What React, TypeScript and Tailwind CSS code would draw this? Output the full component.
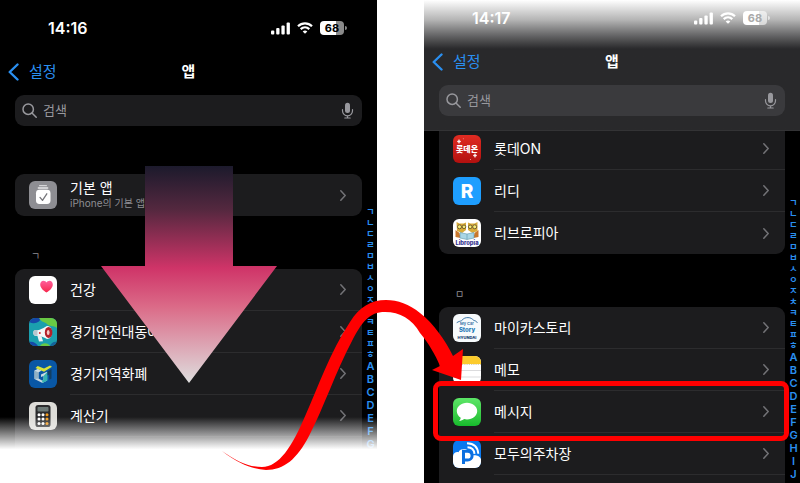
import type { ReactNode } from "react";
import clsx from "clsx";

type AppRow = {
  name: string;
  icon: ReactNode;
  caption?: string;
  highlighted?: boolean;
};

const HANGUL = "ㄱㄴㄷㄹㅁㅂㅅㅇㅈㅊㅋㅌㅍㅎ".split("");

function IconTile({ className, children }: { className: string; children: ReactNode }) {
  return (
    <span className={clsx("size-7 shrink-0 overflow-hidden rounded-md", className)}>
      <svg viewBox="0 0 28 28" className="size-7" aria-hidden="true">
        {children}
      </svg>
    </span>
  );
}

function DefaultAppsIcon() {
  return (
    <IconTile className="bg-[#8e8e93]">
      <rect x="10" y="4" width="8" height="1.3" rx="0.6" fill="#d5d5d8" />
      <rect x="8.6" y="6.2" width="10.8" height="1.6" rx="0.8" fill="#e9e9eb" />
      <rect x="7" y="8.8" width="14.5" height="14.2" rx="3.4" fill="#fff" />
      <path d="M11 16.4l2.5 3 4.3-6.6" fill="none" stroke="#77777c" strokeWidth="1.3" strokeLinecap="round" strokeLinejoin="round" />
    </IconTile>
  );
}

function HealthIcon() {
  return (
    <IconTile className="bg-white">
      <defs>
        <linearGradient id="heart" x1="0" y1="0" x2="0" y2="1">
          <stop offset="0" stopColor="#ff5f9c" />
          <stop offset="1" stopColor="#f6264a" />
        </linearGradient>
      </defs>
      <path
        d="M17.5 16.6C14 14.2 11.2 11.6 11.2 8.4c0-2.2 1.5-3.7 3.3-3.7 1.3 0 2.4.7 3 1.8.6-1.1 1.7-1.8 3-1.8 1.8 0 3.3 1.5 3.3 3.7 0 3.2-2.8 5.8-6.3 8.2z"
        fill="url(#heart)"
      />
    </IconTile>
  );
}

function SafetyMapIcon() {
  return (
    <IconTile className="bg-[#1b9fae]">
      <path d="M0 0h12c-1 4-6 7-12 4z" fill="#1548a8" />
      <path d="M10 0h18v10c-4-3-7-1-10-4-2-2-6-2-8-6z" fill="#69c944" />
      <path d="M0 24c4-1 7 1 9 4H0z" fill="#1548a8" />
      <path d="M11 28c2-3 7-4 10 0z" fill="#69c944" />
      <path d="M21 28c1-3 4-5 7-4v4z" fill="#14639b" />
      <path d="M5 12.500l5-.6 9-3.900v13l-8-3-5.200-.3c-1.800-.8-1.900-4-.8-5.200z" fill="#f4f7f8" />
      <path d="M8.300 17.500l4.200.8 1.500 5-4 .2z" fill="#eef2f4" />
      <path d="M5 12.500l3.500-.4v5.500l-2.700-.1c-1.800-.6-1.900-3.800-.8-5z" fill="#b9c6ce" />
      <ellipse cx="18.600" cy="14.400" rx="4.400" ry="6.400" fill="#f4f7f8" />
      <ellipse cx="19.600" cy="14.400" rx="3.800" ry="5.500" fill="#b42029" />
      <ellipse cx="19.200" cy="14.400" rx="1.400" ry="2.500" fill="#f5c9c5" />
      <circle cx="10.800" cy="15" r="1" fill="#d62b2f" />
    </IconTile>
  );
}

function LocalPayIcon() {
  return (
    <IconTile className="bg-[#0957a5]">
      <path d="M5.500 10.500L9 8.800l3.500 1.600-3 2v6.200l3.500 2 1.500-1V16l-2.500 1v-2.500l6-2.700v8.700L13.500 23l-8-4z" fill="#c9d9e2" />
      <path d="M9.500 12.400v6.200l-4 .4v-8.500z" fill="#8fb0c4" />
      <path d="M13 20.600l1.500-1V16l4-4.200v8.700L13.500 23z" fill="#35b3b0" />
      <path d="M18.500 11.500L22.500 9v9.500l-2.300 1.300v-5.300l-1.700 1z" fill="#123f63" />
      <path d="M6.500 8l2.200-2 6.300 2.500L21 5.400l2 1.400-8 5z" fill="#d6e23a" />
    </IconTile>
  );
}

function CalculatorIcon() {
  return (
    <IconTile className="bg-[#dddcd8]">
      <rect x="6.500" y="3" width="15" height="22" rx="2.600" fill="#2b2b2d" />
      <rect x="8.500" y="5" width="11" height="4.500" rx="0.800" fill="#6d7977" />
      {[12.8, 17.1, 21.4].map((y) => (
        <g key={y}>
          <circle cx="10" cy={y} r="1.500" fill="#fff" />
          <circle cx="14" cy={y} r="1.500" fill="#fff" />
          <circle cx="18" cy={y} r="1.500" fill="#f39c20" />
        </g>
      ))}
    </IconTile>
  );
}

function LotteOnIcon() {
  return (
    <IconTile className="bg-linear-to-b from-[#e02b22] to-[#b3100f]">
      <text x="14" y="17" textAnchor="middle" fontSize="8" fontWeight="900" fill="#fff">
        롯데온
      </text>
      <path d="M6 4.500l.6 1.400 1.400.6-1.400.6L6 8.500l-.6-1.400L4 6.500l1.400-.6z" fill="#fff" stroke="#fff" strokeWidth="0.500" />
      <path d="M22 18.500l.6 1.400 1.400.6-1.400.6-.6 1.400-.6-1.400-1.400-.6 1.400-.6z" fill="#fff" stroke="#fff" strokeWidth="0.500" />
      <circle cx="10.300" cy="3.800" r="0.500" fill="#f3a19d" />
      <circle cx="17.500" cy="24.500" r="0.600" fill="#f3a19d" />
    </IconTile>
  );
}

function RidiIcon() {
  return (
    <IconTile className="bg-[#1e9eff]">
      <text x="14" y="21" textAnchor="middle" fontSize="19" fontWeight="800" fill="#fff">
        R
      </text>
    </IconTile>
  );
}

function LibropiaIcon() {
  return (
    <IconTile className="bg-white">
      <path d="M3.500 3l3 1.500h4L13 3.500v7.500l-4 3-5-2zM15 3.500l2.500 1h4l3-1.500v9l-5 2-4.500-3z" fill="#d8ab3a" />
      <path d="M2.500 11l4 3 1 5-5-1zM25.500 11l-4 3-1 5 5-1z" fill="#c9772c" />
      <circle cx="6.500" cy="7.800" r="2" fill="#f7ec75" stroke="#57452a" strokeWidth="0.800" />
      <circle cx="11" cy="7.800" r="1.800" fill="#f7ec75" stroke="#57452a" strokeWidth="0.800" />
      <circle cx="17.200" cy="7.800" r="1.800" fill="#f7ec75" stroke="#57452a" strokeWidth="0.800" />
      <circle cx="21.700" cy="7.800" r="2" fill="#f7ec75" stroke="#57452a" strokeWidth="0.800" />
      <path d="M7 13.500l7 1.500 7-1.500v5.500l-7 1.500-7-1.500z" fill="#a9d6e6" stroke="#5f98ad" strokeWidth="0.600" />
      <path d="M14 15v5.500" stroke="#5f98ad" strokeWidth="0.600" />
      <text x="14" y="25.600" textAnchor="middle" fontSize="5.800" fontWeight="800" fill="#33318f">
        Libropia
      </text>
    </IconTile>
  );
}

function MyCarStoryIcon() {
  return (
    <IconTile className="bg-[#f7fafc]">
      <path d="M4 8.500c1.500-1 3-1.200 4.500-1.800C11 4 12.500 3.600 15 3.600c2.800 0 4 1.200 5.800 2.800 1.500.4 2.700.8 3.400 2.100" fill="none" stroke="#27689e" strokeWidth="0.900" strokeLinecap="round" />
      <text x="14" y="11" textAnchor="middle" fontSize="4" fontWeight="600" fill="#27689e">
        My Car
      </text>
      <text x="14" y="18" textAnchor="middle" fontSize="6" fontWeight="800" fill="#1f7ab8">
        Story
      </text>
      <text x="14" y="25" textAnchor="middle" fontSize="4" fontWeight="800" fill="#133b73">
        HYUNDAI
      </text>
    </IconTile>
  );
}

function NotesIcon() {
  return (
    <IconTile className="bg-white">
      <rect width="28" height="8" fill="#fccb2d" />
      <path d="M0 8.500h28" stroke="#c9b98a" strokeWidth="0.800" strokeDasharray="0.800 1" />
      <path d="M0 14.500h28M0 21h28" stroke="#d2d2d4" strokeWidth="0.800" />
    </IconTile>
  );
}

function MessagesIcon() {
  return (
    <IconTile className="bg-linear-to-b from-[#5ce667] to-[#14bb2c]">
      <path d="M14 4.800c5.700 0 10.200 3.700 10.200 8.300S19.700 21.400 14 21.400c-1 0-2-.1-2.900-.3-1.300 1-3 1.800-5 1.900.9-.9 1.500-1.900 1.600-3.200-2.400-1.500-3.900-3.900-3.900-6.700 0-4.600 4.500-8.300 10.200-8.300z" fill="#fff" />
    </IconTile>
  );
}

function ParkingIcon() {
  return (
    <IconTile className="bg-[#0b79ef]">
      <path d="M0 28V16c.5-2.800 3-4.500 5.500-3.800C7 8.500 13 8 15.500 11c3 5 5.500 4 8 4.500 2.500.5 4 2 4.500 4V28z" fill="#fff" />
      <path d="M10.500 24V11.300h4.200a4.400 4.400 0 010 8.800h-3" fill="none" stroke="#0b6fe0" strokeWidth="3" />
      <path d="M14.500 7.200c4 .2 6.600 2.600 7 6.600M14 3.300c6.500.2 10.800 4 11.300 10.500" fill="none" stroke="#fff" strokeWidth="1.900" />
    </IconTile>
  );
}

const defaultApps: AppRow[] = [
  { name: "기본 앱", caption: "iPhone의 기본 앱을 관리하세요", icon: <DefaultAppsIcon /> },
];

const giyeokApps: AppRow[] = [
  { name: "건강", icon: <HealthIcon /> },
  { name: "경기안전대동여지도", icon: <SafetyMapIcon /> },
  { name: "경기지역화폐", icon: <LocalPayIcon /> },
  { name: "계산기", icon: <CalculatorIcon /> },
];

const rieulApps: AppRow[] = [
  { name: "롯데ON", icon: <LotteOnIcon /> },
  { name: "리디", icon: <RidiIcon /> },
  { name: "리브로피아", icon: <LibropiaIcon /> },
];

const mieumApps: AppRow[] = [
  { name: "마이카스토리", icon: <MyCarStoryIcon /> },
  { name: "메모", icon: <NotesIcon /> },
  { name: "메시지", icon: <MessagesIcon />, highlighted: true },
  { name: "모두의주차장", icon: <ParkingIcon /> },
];

function StatusBar({ time, faded }: { time: string; faded?: boolean }) {
  return (
    <div className="flex h-5 items-center justify-between pr-[30px] pl-12">
      <span className="text-base font-semibold">{time}</span>
      <div className="flex items-center gap-[7px]">
        <svg viewBox="0 0 19 13" className="h-[13px] w-[19px]" fill="currentColor" aria-hidden="true">
          <rect x="0" y="8.500" width="3.300" height="4" rx="1" />
          <rect x="5.200" y="6" width="3.300" height="6.500" rx="1" />
          <rect x="10.400" y="3.500" width="3.300" height="9" rx="1" />
          <rect x="15.600" y="0.500" width="3.300" height="12" rx="1" />
        </svg>
        <svg viewBox="0 0 16 12" className="h-3 w-4" aria-hidden="true">
          <path d="M1 4.200c4-3.900 10-3.900 14 0M3.700 7.100c2.500-2.400 6.100-2.400 8.600 0" fill="none" stroke="currentColor" strokeWidth="2.200" />
          <path d="M8 11.800L5.700 9.400c1.300-1.200 3.300-1.200 4.600 0z" fill="currentColor" />
        </svg>
        <div className="flex items-center gap-px">
          <span
            className={clsx(
              "flex h-[14px] w-6 items-center justify-center rounded-[4px] bg-linear-to-r from-white from-68% text-[11px] font-bold",
              faded ? "to-white/60 to-68% text-[#aaaaaa]" : "to-[#8a8a8a] to-68% text-black"
            )}
          >
            68
          </span>
          <span className={clsx("h-1 w-[2px] rounded-r-full", faded ? "bg-white/60" : "bg-[#8a8a8a]")} />
        </div>
      </div>
    </div>
  );
}

function Header({ id, time, scrolled }: { id: string; time: string; scrolled?: boolean }) {
  return (
    <header
      className={clsx(
        "relative z-10 pb-[14px]",
        scrolled
          ? "border-b border-[#333335] bg-[#29292b] bg-linear-to-b from-white via-[#b4b4b4] via-[20px] to-[#29292b] to-[49px] pt-2"
          : "pt-[18px]"
      )}
    >
      <StatusBar time={time} faded={scrolled} />
      <div className="mt-[18px] grid h-8 grid-cols-3 items-center px-2">
        <a href="#settings" className="flex items-center gap-[10px] text-[15px] text-[#2a8ff0]">
          <svg viewBox="0 0 11 18" className="h-[18px] w-[11px]" fill="none" stroke="currentColor" strokeWidth="2.400" strokeLinecap="round" strokeLinejoin="round" aria-hidden="true">
            <path d="M9.500 1.500L1.700 9l7.800 7.500" />
          </svg>
          설정
        </a>
        <h1 className="text-center text-[15px] font-bold">앱</h1>
      </div>
      <div
        className={clsx(
          "mx-[15px] mt-[7px] flex h-[31px] items-center gap-[6px] rounded-[9px] pr-2 pl-[7px] text-[#98989d]",
          scrolled ? "bg-[#3a3a3d]" : "bg-[#1c1c1e]"
        )}
      >
        <label htmlFor={id} aria-label="검색">
          <svg viewBox="0 0 15 15" className="size-[15px]" fill="none" stroke="currentColor" strokeWidth="1.500" strokeLinecap="round" aria-hidden="true">
            <circle cx="6.200" cy="6.200" r="5.200" />
            <path d="M10.200 10.200l4 4" />
          </svg>
        </label>
        <input id={id} type="text" placeholder="검색" className="min-w-0 flex-1 bg-transparent text-[13px] outline-none placeholder:text-[#98989d]" />
        <button type="button" aria-label="받아쓰기">
          <svg viewBox="0 0 13 17" className="h-[17px] w-[13px]" fill="none" stroke="currentColor" strokeWidth="1.200" strokeLinecap="round" aria-hidden="true">
            <rect x="4" y="0.800" width="5" height="10.200" rx="2.500" fill="currentColor" stroke="none" />
            <path d="M1.500 7.500v1.300a5 5 0 0010 0V7.500M6.500 13.800v2M3.800 16h5.400" />
          </svg>
        </button>
      </div>
    </header>
  );
}

function Row({ app, last }: { app: AppRow; last: boolean }) {
  return (
    <li className="relative">
      <a href="#app" className="flex h-[42px] items-center gap-[13px] pl-[14px]">
        {app.icon}
        <span
          className={clsx(
            "flex h-full min-w-0 flex-1 items-center justify-between pr-4",
            !last && "border-b border-[#2c2c2e]"
          )}
        >
          <span className="flex min-w-0 flex-col">
            <span className={clsx("text-sm whitespace-nowrap", app.caption && "leading-4")}>{app.name}</span>
            {app.caption && (
              <span className="text-[10px] leading-[14px] whitespace-nowrap text-[#8e8e93]">{app.caption}</span>
            )}
          </span>
          <svg viewBox="0 0 6 11" className="h-[11px] w-[6px] shrink-0" fill="none" stroke="#737377" strokeWidth="1.500" strokeLinecap="round" strokeLinejoin="round" aria-hidden="true">
            <path d="M0.800 0.800l4.400 4.700-4.400 4.700" />
          </svg>
        </span>
      </a>
      {app.highlighted && (
        <span className="pointer-events-none absolute -top-[10px] -right-1 -bottom-2 -left-[6px] z-20 rounded-lg border-[5px] border-[#ff0000]" />
      )}
    </li>
  );
}

function AppList({ apps, className, more }: { apps: AppRow[]; className: string; more?: boolean }) {
  return (
    <ul className={clsx("bg-[#1c1c1e]", className)}>
      {apps.map((app, i) => (
        <Row key={app.name} app={app} last={!more && i === apps.length - 1} />
      ))}
    </ul>
  );
}

function SectionLabel({ children }: { children: ReactNode }) {
  return <h2 className="flex h-[53px] items-end pb-[5px] pl-4 text-[10px] leading-4 text-[#8e8e93]">{children}</h2>;
}

function IndexBar({ latin }: { latin: string }) {
  return (
    <nav aria-label="색인" className="mt-[66px] flex w-[15px] shrink-0 flex-col pl-[2px] text-center font-semibold text-[#2a8ff0]">
      {HANGUL.map((letter) => (
        <a key={letter} href="#index" className="h-[11px] text-[9px] leading-[11px]">
          {letter}
        </a>
      ))}
      {latin.split("").map((letter) => (
        <a key={letter} href="#index" className="h-[13px] text-[11px] leading-[13px]">
          {letter}
        </a>
      ))}
    </nav>
  );
}

function DownArrow() {
  return (
    <svg viewBox="0 0 176 218" className="absolute top-[166px] left-1/2 z-20 h-[218px] w-44 -translate-x-1/2" aria-hidden="true">
      <defs>
        <linearGradient id="down" x1="0" y1="0" x2="0" y2="1">
          <stop offset="0" stopColor="#1c1a2c" />
          <stop offset="0.200" stopColor="#54283f" />
          <stop offset="0.470" stopColor="#cf3468" />
          <stop offset="0.650" stopColor="#db6b88" />
          <stop offset="1" stopColor="#dedede" />
        </linearGradient>
      </defs>
      <path d="M44 0h88v100h44L88 217 0 100h44z" fill="url(#down)" />
    </svg>
  );
}

function CurvedArrow() {
  return (
    <svg viewBox="222 300 242 172" className="pointer-events-none absolute top-[300px] left-[222px] z-30 h-[172px] w-[242px]" aria-hidden="true">
      <path
        d="M222 451C240 465 253 469 266 470C284 470 297 459 309 436C324 407 336 371 352 341C362 322 369 312 385 312C400 312 412 319 420 333C429 344 435 354 440 366L432 370L461 380L463 349L453 356C445 340 434 324 420 313C409 304 398 300 386 300C371 300 359 307 350 322C330 352 318 387 306 414C292 447 279 467 262 467C248 467 236 461 222 451Z"
        fill="#ff0000"
      />
    </svg>
  );
}

export default function App() {
  return (
    <main className="relative grid h-screen grid-cols-[377fr_376fr] items-start gap-[47px] overflow-hidden bg-white text-white [font-family:Inter,'Noto_Sans_CJK_KR',sans-serif]">
      <section className="relative bg-black">
        <Header id="search-left" time="14:16" />
        <div className="flex">
          <div className="min-w-0 flex-1 pt-[34px] pb-4 pl-[15px]">
            <AppList apps={defaultApps} className="rounded-[9px]" />
            <SectionLabel>ㄱ</SectionLabel>
            <AppList apps={giyeokApps} className="-mb-4 rounded-t-[9px] pb-4" more />
          </div>
          <IndexBar latin="ABCDEFG" />
        </div>
        <DownArrow />
        <div className="absolute inset-x-0 bottom-0 z-10 h-9 bg-linear-to-b from-transparent to-white to-90%" />
      </section>
      <section className="h-screen overflow-hidden bg-black">
        <Header id="search-right" time="14:17" scrolled />
        <div className="flex">
          <div className="-mt-[3px] min-w-0 flex-1 pl-[15px]">
            <AppList apps={rieulApps} className="rounded-b-[9px]" />
            <SectionLabel>ㅁ</SectionLabel>
            <AppList apps={mieumApps} className="rounded-t-[9px] pb-10" more />
          </div>
          <IndexBar latin="ABCDEFGHIJ" />
        </div>
      </section>
      <CurvedArrow />
    </main>
  );
}
